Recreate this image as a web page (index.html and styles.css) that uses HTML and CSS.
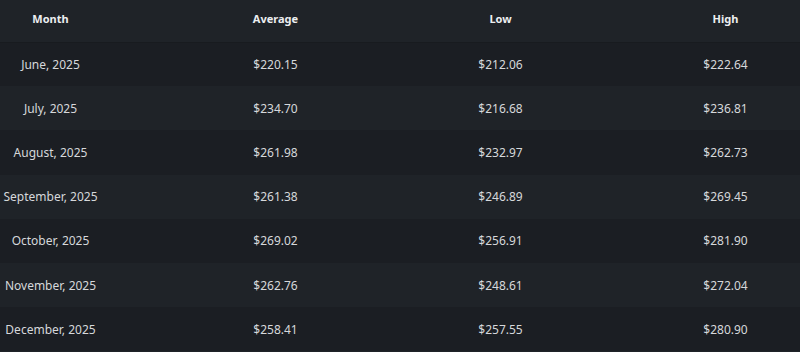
FILE: index.html
```html
<!DOCTYPE html>
<html lang="en">
<head>
    <title>Monthly Price Forecast</title>
    <link rel="stylesheet" href="styles.css">
</head>
<body>
    <div class="table-wrap">
        <table class="price-table">
            <thead>
                <tr>
                    <th>Month</th>
                    <th>Average</th>
                    <th>Low</th>
                    <th>High</th>
                </tr>
            </thead>
            <tbody>
                <tr><td>June, 2025</td><td>$220.15</td><td>$212.06</td><td>$222.64</td></tr>
                <tr><td>July, 2025</td><td>$234.70</td><td>$216.68</td><td>$236.81</td></tr>
                <tr><td>August, 2025</td><td>$261.98</td><td>$232.97</td><td>$262.73</td></tr>
                <tr><td>September, 2025</td><td>$261.38</td><td>$246.89</td><td>$269.45</td></tr>
                <tr><td>October, 2025</td><td>$269.02</td><td>$256.91</td><td>$281.90</td></tr>
                <tr><td>November, 2025</td><td>$262.76</td><td>$248.61</td><td>$272.04</td></tr>
                <tr><td>December, 2025</td><td>$258.41</td><td>$257.55</td><td>$280.90</td></tr>
            </tbody>
        </table>
    </div>
</body>
</html>
```

FILE: styles.css
```css
body {
    margin: 0;
    padding: 0;
    background-color: #1f2328;
    font-family: "Noto Sans", "Open Sans", sans-serif;
    overflow: hidden;
}

.table-wrap {
    width: 800px;
    height: 352px;
    overflow: hidden;
}

.price-table {
    width: 900px;
    margin-left: -62px;
    border-collapse: collapse;
    table-layout: fixed;
}

.price-table th {
    box-sizing: border-box;
    height: 42px;
    padding: 0 0 4px 0;
    font-size: 11px;
    font-weight: bold;
    color: #eceef0;
    text-align: center;
    vertical-align: middle;
    background-color: #1f2328;
    border-bottom: 1px solid #181b1f;
}

.price-table td {
    box-sizing: border-box;
    height: 44.2px;
    padding: 0;
    font-size: 12px;
    color: #d6d8db;
    text-align: center;
    vertical-align: middle;
}

.price-table tbody tr:nth-child(odd) {
    background-color: #1b1e23;
}

.price-table tbody tr:nth-child(even) {
    background-color: #1f2328;
}
```
